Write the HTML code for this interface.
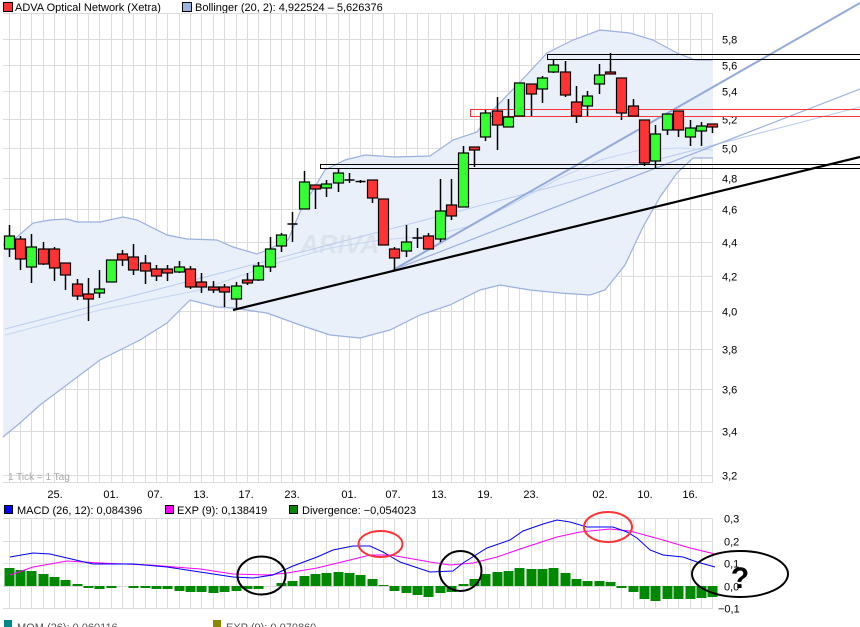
<!DOCTYPE html>
<html><head><meta charset="utf-8">
<style>
html,body{margin:0;padding:0;background:#fff;}
body{width:860px;height:627px;overflow:hidden;position:relative;font-family:"Liberation Sans",Arial,sans-serif;}
svg{position:absolute;left:0;top:0;}
text{font-family:"Liberation Sans",Arial,sans-serif;font-size:11px;fill:#000;}
</style></head>
<body>
<svg id="s" width="860" height="627" viewBox="0 0 860 627" xmlns="http://www.w3.org/2000/svg">
<!-- legends -->
<rect x="3.5" y="2.5" width="9" height="9" fill="#f33" stroke="#000"/>
<text x="15" y="11">ADVA Optical Network (Xetra)</text>
<rect x="182.5" y="2.5" width="9" height="9" fill="#9bb4e2" stroke="#000"/>
<text x="195" y="11">Bollinger (20, 2): 4,922524 – 5,626376</text>
<rect x="4.5" y="505.5" width="8" height="8" fill="#00f" stroke="#000"/>
<text x="17" y="514">MACD (26, 12): 0,084396</text>
<rect x="165.5" y="505.5" width="8" height="8" fill="#f0f" stroke="#000"/>
<text x="177" y="514">EXP (9): 0,138419</text>
<rect x="289.5" y="505.5" width="8" height="8" fill="#080" stroke="#000"/>
<text x="302" y="514">Divergence: −0,054023</text>
<g id="g"></g>
</svg>
<script>
var g=document.getElementById('g'),h='';
function X(k){return 8.5+11.35*k;}
// grid main
var L=3,R=713;
h+='<rect x="'+L+'" y="13" width="'+(R-L)+'" height="470" fill="#fff"/>';
for(var k=0;k<63;k++){var x=Math.round(X(k))+0.5;h+='<line x1="'+x+'" y1="13" x2="'+x+'" y2="483" stroke="#dcdcdc"/>';}
function py(p){return 1327.9-733.2*Math.log(p);}
var labs=['5,8','5,6','5,4','5,2','5,0','4,8','4,6','4,4','4,2','4,0','3,8','3,6','3,4','3,2'];
for(var i=0;i<14;i++){var p=5.8-0.2*i,y=Math.round(py(p))+0.5;h+='<line x1="'+L+'" y1="'+y+'" x2="'+R+'" y2="'+y+'" stroke="#dcdcdc"/>';h+='<text x="722" y="'+(y+4)+'">'+labs[i]+'</text>';}
h+='<line x1="'+L+'" y1="13.5" x2="'+R+'" y2="13.5" stroke="#dcdcdc"/><line x1="'+L+'" y1="482.5" x2="'+R+'" y2="482.5" stroke="#dcdcdc"/>';
h+='<text x="8" y="480" style="fill:#aaa;font-size:10px">1 Tick = 1 Tag</text>';
var dates=[[55,'25.'],[111,'01.'],[155,'07.'],[201,'13.'],[246,'17.'],[292,'23.'],[349,'01.'],[393,'07.'],[439,'13.'],[485,'19.'],[531,'23.'],[600,'02.'],[645,'10.'],[690,'16.']];
dates.forEach(function(d){h+='<text x="'+d[0]+'" y="498" text-anchor="middle">'+d[1]+'</text>';});
// bollinger
var up=[[3,245],[17,237],[33,223],[50,220],[67,219],[77,222],[100,222],[123,217],[137,220],[167,235],[187,239],[217,240],[233,247],[257,254],[267,250],[288,240],[303,205],[313,190],[325,170],[345,160],[365,155],[395,157],[430,156],[453,140],[477,132],[493,110],[520,82],[547,53],[573,40],[600,30],[630,33],[653,40],[677,53],[695,60],[713,60]];
var lo=[[713,158],[693,158],[677,173],[660,197],[643,227],[625,265],[613,280],[605,290],[590,295],[560,293],[530,290],[500,285],[480,290],[450,305],[420,315],[390,330],[360,338],[330,335],[300,325],[267,313],[233,308],[217,307],[190,300],[167,323],[140,340],[120,350],[100,360],[80,375],[60,390],[40,405],[20,423],[3,437]];
function pts(a){return a.map(function(p){return p[0]+','+p[1];}).join(' ');}
h+='<polygon points="'+pts(up)+' '+pts(lo)+'" fill="#eaf0fa"/>';
h+='<polyline points="'+pts(up)+'" fill="none" stroke="#9bb0df" stroke-width="1.2"/>';
h+='<polyline points="'+pts(lo)+'" fill="none" stroke="#9bb0df" stroke-width="1.2"/>';
h+='<text x="300" y="253" style="font-size:26px;font-weight:bold;font-style:italic;fill:#dde3ec">ARIVA</text>';
// MA & thin lines
h+='<polyline points="5,335 100,310 200,290 280,262 330,248 380,240 430,236 470,226 520,200 560,178 600,160 640,150 680,148 713,150" fill="none" stroke="#c5d5f2" stroke-width="1"/>';
h+='<line x1="5" y1="329" x2="860" y2="107" stroke="#b9cbef" stroke-width="1"/>';
h+='<line x1="393" y1="270" x2="860" y2="89" stroke="#9bb0df" stroke-width="1.2"/>';
h+='<line x1="393" y1="270" x2="860" y2="3" stroke="#94aadc" stroke-width="2"/>';
h+='<line x1="233" y1="310" x2="860" y2="157" stroke="#000" stroke-width="2.2"/>';
// horizontal lines
h+='<polyline points="860,54.5 547.5,54.5 547.5,59.5 860,59.5" fill="none" stroke="#000"/>';
h+='<polyline points="860,109.5 470.5,109.5 470.5,116.5 860,116.5" fill="none" stroke="#f33"/>';
h+='<polyline points="860,164.5 320.5,164.5 320.5,168.5 860,168.5" fill="none" stroke="#000"/>';
// candles: color, bodyTop, bodyBottom, wickTop, wickBottom
var C=[['g',236,249,225,257],['r',239,259,236,270],['g',247,267,234,283],['r',249,264,242,265],['r',249,268,247,281],['r',263,275,263,290],['r',284,296,279,300],['r',294,299,278,321],['g',289,293,270,298],['g',260,282,260,282],['r',254,260,250,266],['r',257,270,244,275],['r',263,271,255,284],['r',269,276,265,281],['r',269,273,265,281],['g',267,272,261,273],['r',269,287,266,289],['r',282,287,273,293],['r',287,290,281,293],['r',287,292,284,307],['g',286,299,282,309],['r',280,283,273,285],['g',266,280,262,281],['g',249,267,237,272],['g',235,246,233,252],['d',224,224,212,242],['g',182,209,171,209],['r',185,189,185,209],['g',184,188,180,197],['g',173,183,168,192],['d',180,180,173,183],['d',181.5,181.5,180,183],['r',180,198,180,203],['r',199,245,199,245],['r',249,258,247,270],['g',242,251,225,257],['d',238,238,228,248],['r',236,249,233,249],['g',211,239,179,242],['r',205,216,179,220],['g',153,207,146,207],['r',147,150,147,167],['g',113,137,110,141],['r',111,125,97,150],['g',117,127,99,127],['g',83,116,83,116],['r',84,94,84,116],['g',78,89,76,103],['g',65,72,60,73],['r',72,95,61,97],['r',102,116,86,123],['g',96,106,91,116],['g',75,84,64,94],['r',72,74,53,74],['r',78,113,78,120],['r',106,116,99,116],['r',120,163,120,166],['g',134,161,125,168],['g',114,130,114,135],['r',111,130,111,137],['g',128,137,120,146],['g',126,131,122,146],['r',124,127,124,133]];
C.forEach(function(c,k){var x=Math.round(X(k))+0.5;
 h+='<line x1="'+x+'" y1="'+c[3]+'" x2="'+x+'" y2="'+c[4]+'" stroke="#000" stroke-width="1.5"/>';
 if(c[0]=='d'){h+='<line x1="'+(x-5)+'" y1="'+c[1]+'" x2="'+(x+5)+'" y2="'+c[1]+'" stroke="#000" stroke-width="1.5"/>';}
 else{var hh=Math.max(c[2]-c[1],2);h+='<rect x="'+(x-5)+'" y="'+c[1]+'" width="10" height="'+hh+'" fill="'+(c[0]=='g'?'#3f3':'#f33')+'" stroke="#000" stroke-width="1.2"/>';}
});
// MACD panel
for(var k=0;k<63;k++){var x=Math.round(X(k))+0.5;h+='<line x1="'+x+'" y1="518" x2="'+x+'" y2="608" stroke="#dcdcdc"/>';}
[[518.5,'0,3'],[541.5,'0,2'],[563.5,'0,1'],[586.5,'0,0'],[608.5,'−0,1']].forEach(function(a){h+='<line x1="'+L+'" y1="'+a[0]+'" x2="'+R+'" y2="'+a[0]+'" stroke="#dcdcdc"/>';h+='<text x="'+(a[1][0]=='−'?718:724)+'" y="'+(a[0]+4)+'">'+a[1]+'</text>';});
var B=[568,570,571,574,577,580,584,588,589,588,586,588,588,589,589,591,592,592,593,592,591,589,589,586,583,581,576,574,573,572,573,575,579,585,591,593,595,597,593,592,584,579,574,572,571,568,569,569,568,573,579,581,581,582,588,592,599,601,599,599,599,598,597];
B.forEach(function(b,k){var x=Math.round(X(k))+0.5;var t=Math.min(b,586),hh=Math.abs(b-586);if(hh<1)return;h+='<rect x="'+(x-5)+'" y="'+t+'" width="10" height="'+hh+'" fill="#080"/>';});
h+='<polyline points="10,575 33,567 67,561 100,563 150,565 200,569 233,574 267,575 287,573 317,568 350,560 370,555 390,555 430,562 450,565 473,563 497,557 523,548 557,537 580,532 610,529 630,531 663,540 690,548 715,554" fill="none" stroke="#f0f" stroke-width="1"/>';
h+='<polyline points="10,557 33,553 50,554 67,558 93,564 133,564 167,567 200,572 233,577 253,578 273,575 293,566 317,557 333,550 353,546 370,546 383,552 400,562 430,572 453,571 463,563 487,548 510,540 523,531 543,524 557,520 570,522 587,527 613,527 627,532 637,538 650,550 663,555 683,557 697,562 715,567" fill="none" stroke="#00f" stroke-width="1"/>';
h+='<ellipse cx="261.5" cy="575.5" rx="24" ry="19" fill="none" stroke="#000" stroke-width="2"/>';
h+='<ellipse cx="460.5" cy="571" rx="21" ry="20" fill="none" stroke="#000" stroke-width="2"/>';
h+='<ellipse cx="380.5" cy="544" rx="22" ry="13" fill="none" stroke="#f33" stroke-width="2"/>';
h+='<ellipse cx="608" cy="527" rx="24" ry="15" fill="none" stroke="#f33" stroke-width="2"/>';
h+='<ellipse cx="740" cy="574" rx="48" ry="23" fill="none" stroke="#000" stroke-width="2"/>';
h+='<text x="740" y="588" text-anchor="middle" style="font-size:30px;font-weight:bold">?</text>';
// cut-off bottom legend
h+='<rect x="4" y="620" width="8" height="8" fill="#088"/><text x="17" y="631" style="fill:#555">MOM (26): 0,060116</text>';
h+='<rect x="213" y="620" width="8" height="8" fill="#880"/><text x="226" y="631" style="fill:#555">EXP (9): 0,070860</text>';
g.innerHTML=h;
</script>
</body></html>
